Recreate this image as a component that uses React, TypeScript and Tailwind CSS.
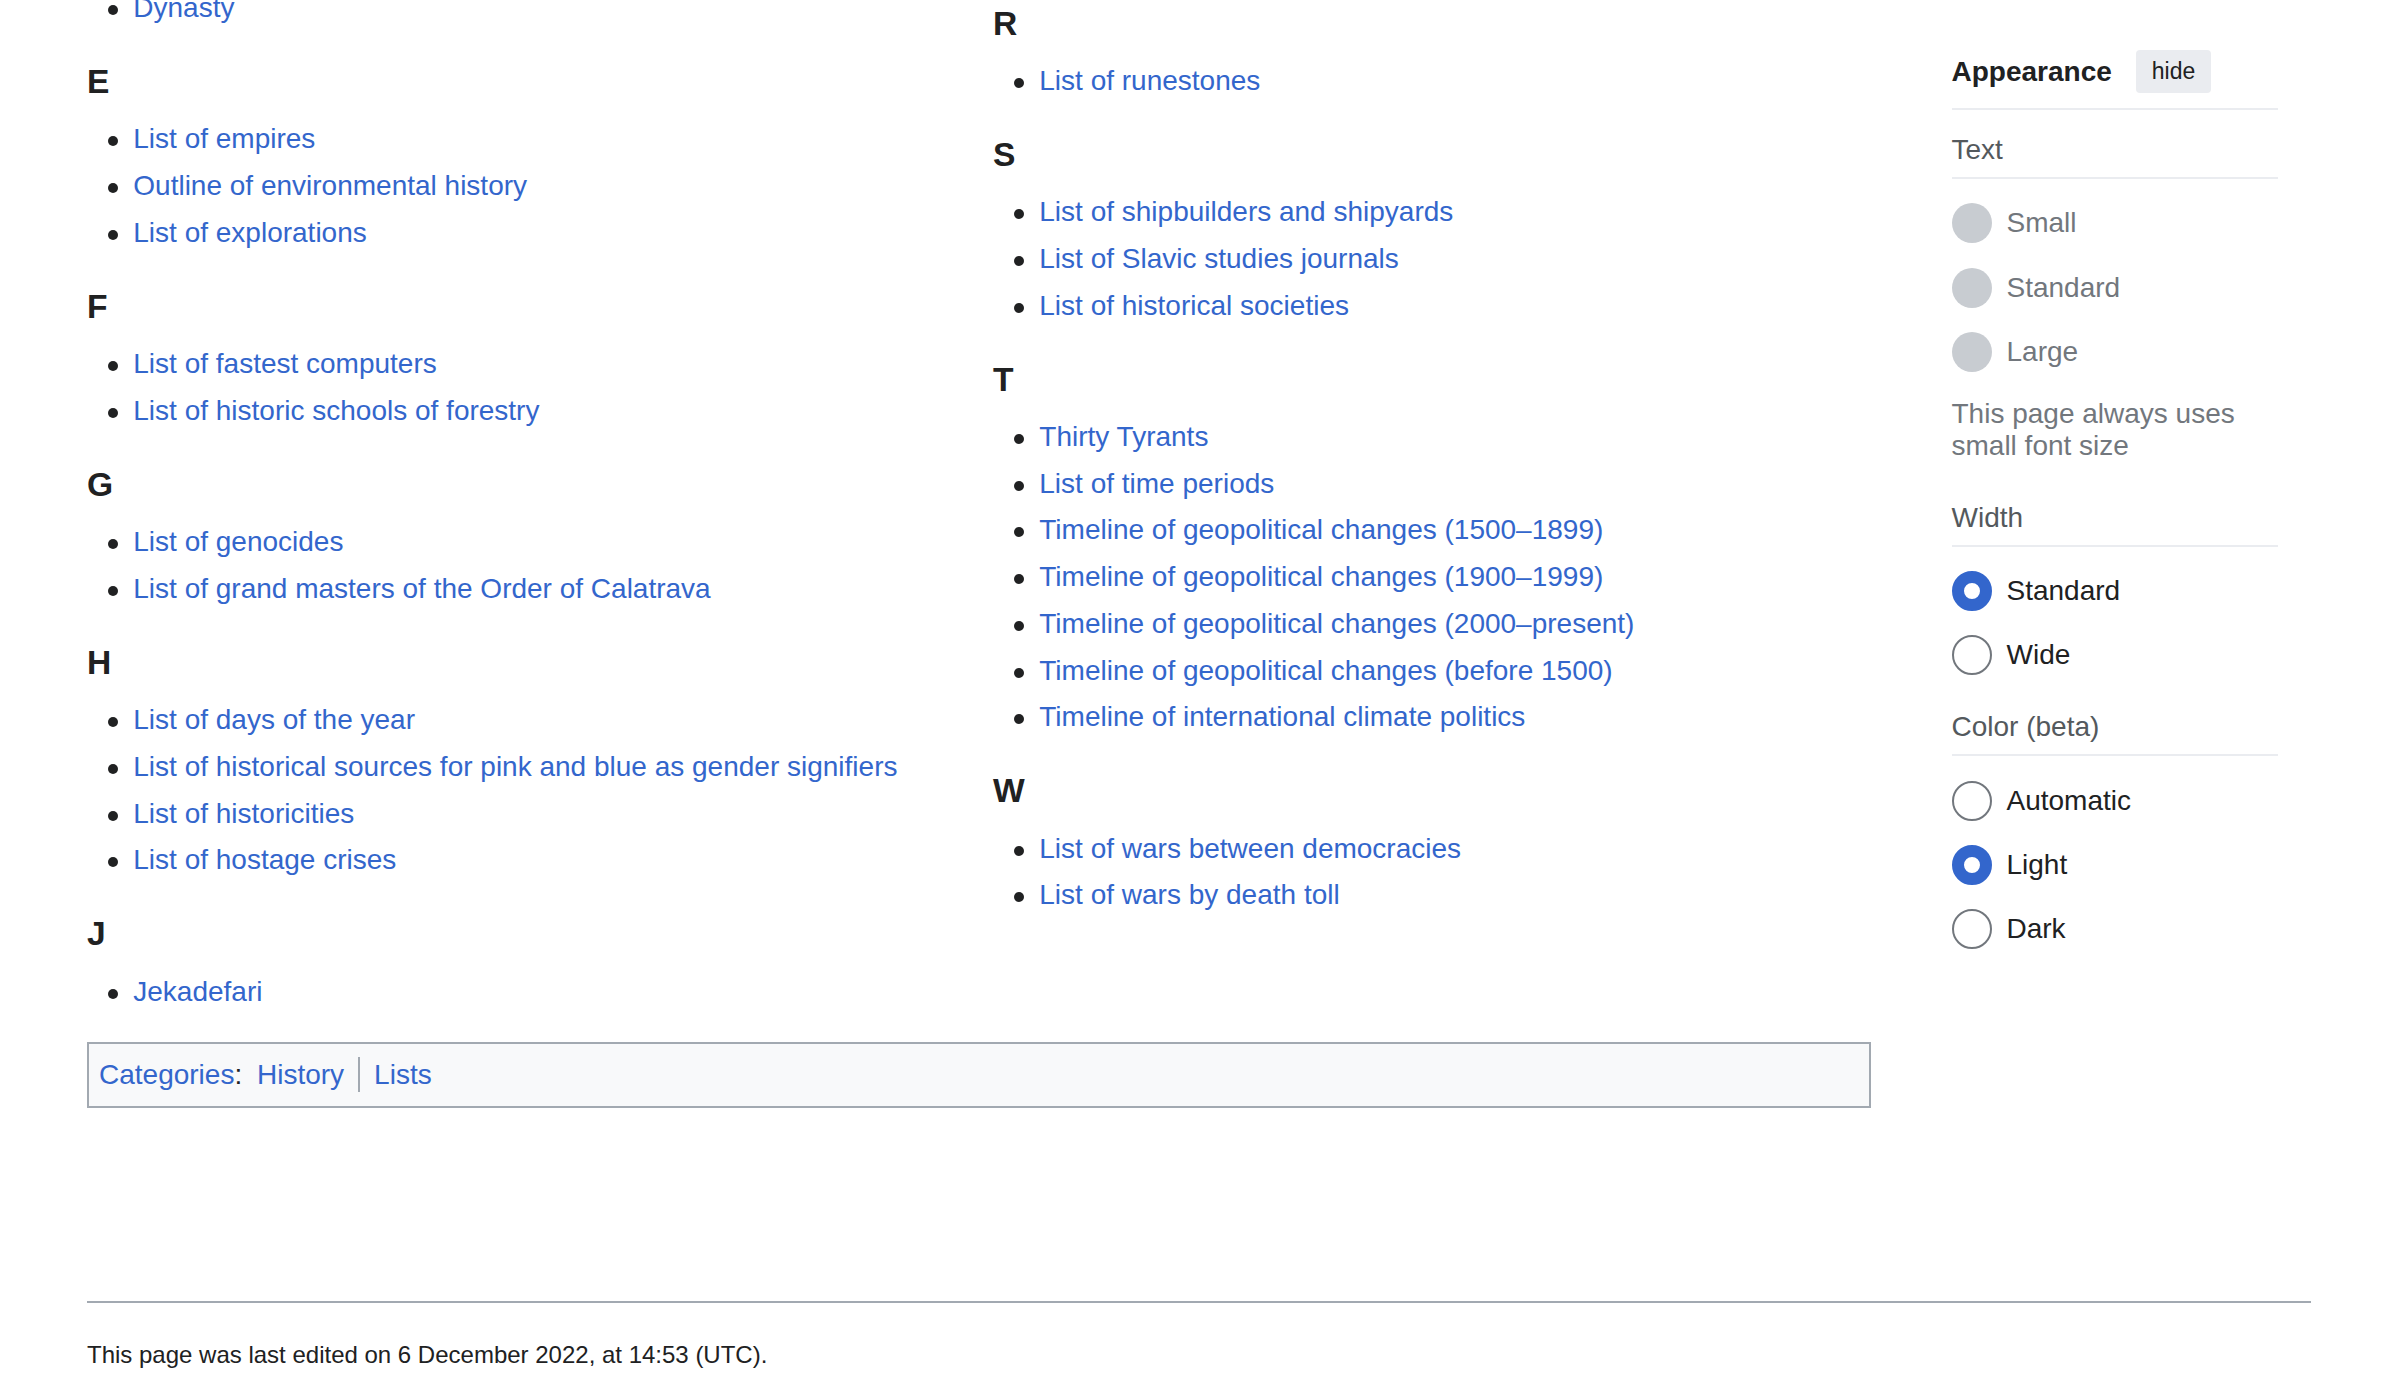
import React from 'react'

type Section = { letter?: string; items: string[] }

const LEFT: Section[] = [
  { items: ['Dynasty'] },
  { letter: 'E', items: ['List of empires', 'Outline of environmental history', 'List of explorations'] },
  { letter: 'F', items: ['List of fastest computers', 'List of historic schools of forestry'] },
  { letter: 'G', items: ['List of genocides', 'List of grand masters of the Order of Calatrava'] },
  {
    letter: 'H',
    items: [
      'List of days of the year',
      'List of historical sources for pink and blue as gender signifiers',
      'List of historicities',
      'List of hostage crises',
    ],
  },
  { letter: 'J', items: ['Jekadefari'] },
]

const RIGHT: Section[] = [
  { letter: 'R', items: ['List of runestones'] },
  { letter: 'S', items: ['List of shipbuilders and shipyards', 'List of Slavic studies journals', 'List of historical societies'] },
  {
    letter: 'T',
    items: [
      'Thirty Tyrants',
      'List of time periods',
      'Timeline of geopolitical changes (1500–1899)',
      'Timeline of geopolitical changes (1900–1999)',
      'Timeline of geopolitical changes (2000–present)',
      'Timeline of geopolitical changes (before 1500)',
      'Timeline of international climate politics',
    ],
  },
  { letter: 'W', items: ['List of wars between democracies', 'List of wars by death toll'] },
]

function LinkList({ items, first }: { items: string[]; first?: boolean }) {
  return (
    <ul className={first ? 'ml-[46.3px]' : 'ml-[46.3px] mt-[8.4px]'}>
      {items.map((item) => (
        <li key={item} className="-ml-[25.5px] flex items-start mb-[2.75px] leading-[44px]">
          <span className="mt-[19px] mr-[15.5px] h-[10px] w-[10px] shrink-0 rounded-full bg-[#202122]" />
          <a href="#" className="text-[#3366cc] whitespace-nowrap">
            {item}
          </a>
        </li>
      ))}
    </ul>
  )
}

function Column({ sections, className }: { sections: Section[]; className: string }) {
  return (
    <div className={className}>
      {sections.map((s, i) => (
        <div key={i}>
          {s.letter && (
            <h3 className="pt-[22.4px] text-[33.6px] font-bold leading-[53.76px] text-[#202122]">{s.letter}</h3>
          )}
          <LinkList items={s.items} first={!s.letter} />
        </div>
      ))}
    </div>
  )
}

function Radio({ label, state }: { label: string; state: 'on' | 'off' | 'disabled' }) {
  const circle =
    state === 'on'
      ? 'border-[12px] border-[#3366cc] bg-white'
      : state === 'off'
        ? 'border-2 border-[#72777d] bg-white'
        : 'bg-[#c8ccd1]'
  return (
    <div className="flex h-[40px] items-center">
      <span className={`h-[40px] w-[40px] shrink-0 rounded-full ${circle}`} />
      <span className={`ml-[15px] leading-[40px] ${state === 'disabled' ? 'text-[#72777d]' : 'text-[#202122]'}`}>
        {label}
      </span>
    </div>
  )
}

function GroupLabel({ children }: { children: string }) {
  return (
    <div className="border-b-2 border-[#eaecf0] pt-[18px] pb-[5px] leading-[44px] text-[#54595d]">{children}</div>
  )
}

function Appearance() {
  return (
    <aside className="ml-[80.5px] w-[326px] shrink-0 pt-[50px] text-[28px]">
      <div className="flex h-[43px] items-center">
        <span className="font-bold leading-[43px] text-[#202122]">Appearance</span>
        <button className="ml-[24px] h-[43px] rounded-[4px] bg-[#eaecf0] px-[16px] text-[23px] text-[#202122]">
          hide
        </button>
      </div>
      <div className="mt-[15px] h-[2px] bg-[#eaecf0]" />

      <GroupLabel>Text</GroupLabel>
      <div className="mt-[24px] flex flex-col gap-[24.5px]">
        <Radio label="Small" state="disabled" />
        <Radio label="Standard" state="disabled" />
        <Radio label="Large" state="disabled" />
      </div>
      <p className="mt-[25.5px] leading-[32px] text-[#72777d]">
        This page always uses
        <br />
        small font size
      </p>

      <div className="mt-[16px]">
        <GroupLabel>Width</GroupLabel>
      </div>
      <div className="mt-[24.5px] flex flex-col gap-[24px]">
        <Radio label="Standard" state="on" />
        <Radio label="Wide" state="off" />
      </div>

      <div className="mt-[12px]">
        <GroupLabel>Color (beta)</GroupLabel>
      </div>
      <div className="mt-[25px] flex flex-col gap-[24px]">
        <Radio label="Automatic" state="off" />
        <Radio label="Light" state="on" />
        <Radio label="Dark" state="off" />
      </div>
    </aside>
  )
}

export default function App() {
  return (
    <div className="h-[1398px] overflow-hidden bg-white pl-[87px] pr-[89px] font-['Liberation_Sans',Arial,sans-serif] text-[28px] text-[#202122]">
      <div className="flex items-start">
        <main className="w-[1784px] shrink-0">
          <div className="grid grid-cols-2 gap-x-[28px]">
            <Column sections={LEFT} className="-mt-[14.2px] min-w-0" />
            <Column sections={RIGHT} className="-mt-[25.8px] min-w-0" />
          </div>

          <div className="mt-[26px] border-2 border-[#a2a9b1] bg-[#f8f9fa] px-[10px] py-[10px] leading-[42px]">
            <a href="#" className="text-[#3366cc]">
              Categories
            </a>
            :{' '}
            <ul className="inline">
              <li className="inline-block pl-[7px] pr-[14px] leading-[35px]">
                <a href="#" className="text-[#3366cc]">
                  History
                </a>
              </li>
              <li className="inline-block border-l-2 border-[#a2a9b1] px-[14px] leading-[35px]">
                <a href="#" className="text-[#3366cc]">
                  Lists
                </a>
              </li>
            </ul>
          </div>
        </main>

        <Appearance />
      </div>

      <footer className="mt-[192.5px]">
        <div className="h-[2px] bg-[#a2a9b1]" />
        <p className="mt-[33.5px] text-[24px] leading-[38.4px] text-[#202122]">
          This page was last edited on 6 December 2022, at 14:53 (UTC).
        </p>
      </footer>
    </div>
  )
}
